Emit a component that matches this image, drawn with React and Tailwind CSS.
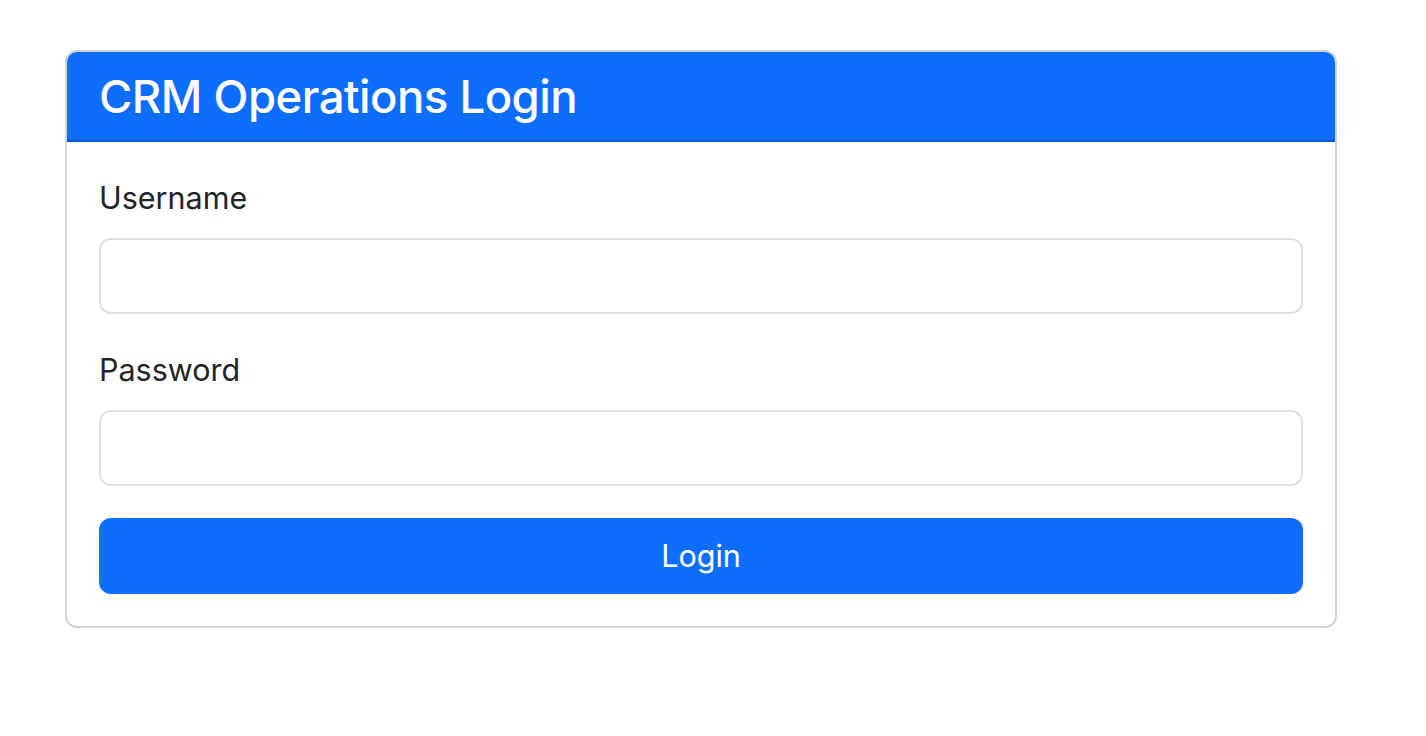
import React, { useState } from 'react';

export default function App() {
  const [username, setUsername] = useState('');
  const [password, setPassword] = useState('');

  return (
    <div className="min-h-screen bg-white text-[#212529] font-['Inter','Noto_Sans',sans-serif]">
      <div className="pt-[50px] pl-[65px]">
        <div className="w-[1272px] border-2 border-[rgba(0,0,0,0.175)] rounded-[12px] overflow-hidden bg-white">
          <div className="h-[90px] bg-[#0d6efd] border-b-2 border-[rgba(0,0,0,0.175)] px-[32px] flex items-center">
            <h3 className="text-[45.5px] leading-[1.2] font-medium text-white tracking-[-0.5px] pt-[2px]">CRM Operations Login</h3>
          </div>
          <form className="p-[32px]" onSubmit={(e) => e.preventDefault()}>
            <div className="mb-[32px]">
              <label className="block text-[30.5px] leading-[48px] mb-[16px]">Username</label>
              <input
                type="text"
                value={username}
                onChange={(e) => setUsername(e.target.value)}
                className="block w-full h-[76px] border-2 border-[#dee2e6] rounded-[12px] px-[24px] text-[30px] outline-none"
              />
            </div>
            <div className="mb-[32px]">
              <label className="block text-[30.5px] leading-[48px] mb-[16px]">Password</label>
              <input
                type="password"
                value={password}
                onChange={(e) => setPassword(e.target.value)}
                className="block w-full h-[76px] border-2 border-[#dee2e6] rounded-[12px] px-[24px] text-[30px] outline-none"
              />
            </div>
            <button
              type="submit"
              className="block w-full h-[76px] bg-[#0d6efd] text-white rounded-[12px] text-[30.5px]"
            >
              Login
            </button>
          </form>
        </div>
      </div>
    </div>
  );
}
